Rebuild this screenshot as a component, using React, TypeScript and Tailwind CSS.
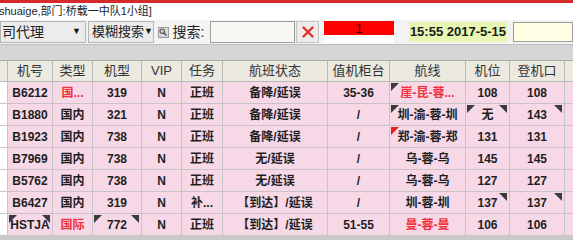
import React from 'react'

type Mark = 'tl' | 'tr' | 'tlr'

type Row = {
  no: string
  type: string
  typeRed?: boolean
  model: string
  vip: string
  task: string
  status: string
  counter: string
  route: string
  routeRed?: boolean
  stand: string
  gate: string
  marks?: Record<string, Mark[]>
}

const rows: Row[] = [
  { no: 'B6212', type: '国...', typeRed: true, model: '319', vip: 'N', task: '正班', status: '备降/延误', counter: '35-36', route: '崖-昆-蓉...', routeRed: true, stand: '108', gate: '108', marks: { route: ['tl'] } },
  { no: 'B1880', type: '国内', model: '321', vip: 'N', task: '正班', status: '备降/延误', counter: '/', route: '圳-渝-蓉-圳', stand: '无', gate: '143', marks: { route: ['tl'], stand: ['tl', 'tr'], gate: ['tr'] } },
  { no: 'B1923', type: '国内', model: '738', vip: 'N', task: '正班', status: '备降/延误', counter: '/', route: '郑-渝-蓉-郑', stand: '131', gate: '131', marks: { route: ['tlr'] } },
  { no: 'B7969', type: '国内', model: '738', vip: 'N', task: '正班', status: '无/延误', counter: '/', route: '乌-蓉-乌', stand: '145', gate: '145' },
  { no: 'B5762', type: '国内', model: '738', vip: 'N', task: '正班', status: '无/延误', counter: '/', route: '乌-蓉-乌', stand: '127', gate: '127' },
  { no: 'B6427', type: '国内', model: '319', vip: 'N', task: '补...', status: '【到达】/延误', counter: '/', route: '圳-蓉-圳', stand: '137', gate: '137', marks: { stand: ['tr'], gate: ['tr'] } },
  { no: 'HSTJA', type: '国际', typeRed: true, model: '772', vip: 'N', task: '正班', status: '【到达】/延误', counter: '51-55', route: '曼-蓉-曼', routeRed: true, stand: '106', gate: '106', marks: { no: ['tl', 'tr'], model: ['tl', 'tr'] } },
]

const cols = 'grid grid-cols-[8px_45px_40px_49px_40px_41px_105px_62px_76px_44px_55px_20px]'

function Corner({ kind }: { kind: Mark }) {
  if (kind === 'tr') {
    return (
      <svg className="absolute top-[1px] right-[2px]" width="8" height="8" viewBox="0 0 8 8">
        <polygon points="0,0 8,0 8,8" fill="#3a3a3a" />
      </svg>
    )
  }
  return (
    <svg className="absolute top-[1px] left-[1px]" width="8" height="8" viewBox="0 0 8 8">
      <polygon points="0,0 8,0 0,8" fill={kind === 'tlr' ? '#e82020' : '#3a3a3a'} />
    </svg>
  )
}

function Cell({ children, marks, red }: { children: React.ReactNode; marks?: Mark[]; red?: boolean }) {
  return (
    <div
      className={
        'relative flex items-center justify-center border-r border-b border-[#c9c2c6] bg-[#f6d8e7] text-[12px] font-bold whitespace-nowrap overflow-hidden ' +
        (red ? 'text-[#f0303c]' : 'text-[#1e1e1e]')
      }
    >
      {marks?.map((m, i) => <Corner key={i} kind={m} />)}
      {children}
    </div>
  )
}

export default function App() {
  const headers = ['机号', '类型', '机型', 'VIP', '任务', '航班状态', '值机柜台', '航线', '机位', '登机口']

  return (
    <div className="w-[573px] h-[240px] overflow-hidden bg-[#c9c9c9] font-['Liberation_Sans','Noto_Sans_CJK_SC',sans-serif]">
      {/* title strip */}
      <div className="h-[3px] bg-[#d42a2a]" />
      <div className="h-[17px] bg-white flex items-center overflow-hidden">
        <span className="ml-[-1px] text-[11px] text-[#222] whitespace-nowrap">shuaige,部门:桥载一中队1小组]</span>
      </div>

      {/* toolbar */}
      <div className="h-[25px] bg-[#f3f3f3] flex items-center border-b border-[#bdbdbd] overflow-hidden">
        <div className="w-[90px] h-[22px] flex items-center justify-between bg-[#ececec] border border-[#b4b4b4] pl-[1px] pr-[4px]">
          <span className="text-[14px] text-[#222] whitespace-nowrap">司代理</span>
          <span className="text-[9px] text-[#111]">▼</span>
        </div>
        <div className="ml-[2px] w-[66px] h-[22px] flex items-center justify-between bg-[#ececec] border border-[#b4b4b4] pl-[3px] pr-[3px]">
          <span className="text-[13px] text-[#222] whitespace-nowrap">模糊搜索</span>
          <span className="text-[9px] text-[#111]">▼</span>
        </div>
        <div className="ml-[4px] w-[11px] h-[11px] bg-[#d9d9d9] border border-[#9a9a9a] flex items-center justify-center">
          <svg width="8" height="8" viewBox="0 0 8 8">
            <circle cx="3.2" cy="3.2" r="2.2" fill="none" stroke="#555" strokeWidth="1.2" />
            <line x1="4.8" y1="4.8" x2="7.5" y2="7.5" stroke="#555" strokeWidth="1.4" />
          </svg>
        </div>
        <span className="ml-[4px] w-[39px] text-[14px] text-[#222] whitespace-nowrap">搜索:</span>
        <div className="w-[90px] h-[22px] bg-[#f8f8f2] border border-[#9c9c9c]" />
        <div className="ml-[1px] w-[24px] h-[22px] bg-[#ececec] border border-[#c4c4c4] flex items-center justify-center">
          <svg width="12" height="12" viewBox="0 0 12 12">
            <path d="M1.5 1.5 L10.5 10.5 M10.5 1.5 L1.5 10.5" stroke="#e03030" strokeWidth="2.4" strokeLinecap="round" />
          </svg>
        </div>
        <div className="ml-[5px] w-[73px] h-[22px] flex flex-col">
          <div className="h-[14px] bg-[#ff0000] flex items-center justify-center text-[13px] text-[#300] pt-[1px]">1</div>
          <div className="flex-1 bg-white" />
        </div>
        <div className="ml-[15px] w-[103px] h-[20px] bg-[#e8f6b4] flex items-center justify-center text-[13px] font-bold text-[#1b1b1b] whitespace-nowrap">
          15:55 2017-5-15
        </div>
        <div className="ml-[6px] w-[60px] h-[20px] bg-[#fffde4] border border-[#9a9a9a] shrink-0" />
      </div>

      {/* gray band */}
      <div className="h-[15px] bg-[#d5d5d5]" />

      {/* grid */}
      <div className="w-[600px] border-t border-[#a9a9a9]">
        <div className={cols + ' h-[21px]'}>
          <div className="border-r border-b border-[#b9b9b9] bg-[#ebe9e0]" />
          {headers.map(h => (
            <div key={h} className="flex items-center justify-center border-r border-b border-[#b9b9b9] bg-[#ebe9e0] text-[13px] text-[#333]">
              {h}
            </div>
          ))}
          <div className="border-b border-[#b9b9b9] bg-[#ebe9e0]" />
        </div>
        {rows.map(r => (
          <div key={r.no} className={cols + ' h-[22px]'}>
            <div className="border-r border-b border-[#c6c6c6] bg-white" />
            <Cell marks={r.marks?.no}>{r.no}</Cell>
            <Cell red={r.typeRed} marks={r.marks?.type}>{r.type}</Cell>
            <Cell marks={r.marks?.model}>{r.model}</Cell>
            <Cell>{r.vip}</Cell>
            <Cell>{r.task}</Cell>
            <Cell>{r.status}</Cell>
            <Cell>{r.counter}</Cell>
            <Cell red={r.routeRed} marks={r.marks?.route}>{r.route}</Cell>
            <Cell marks={r.marks?.stand}>{r.stand}</Cell>
            <Cell marks={r.marks?.gate}>{r.gate}</Cell>
            <Cell>{''}</Cell>
          </div>
        ))}
      </div>
    </div>
  )
}
